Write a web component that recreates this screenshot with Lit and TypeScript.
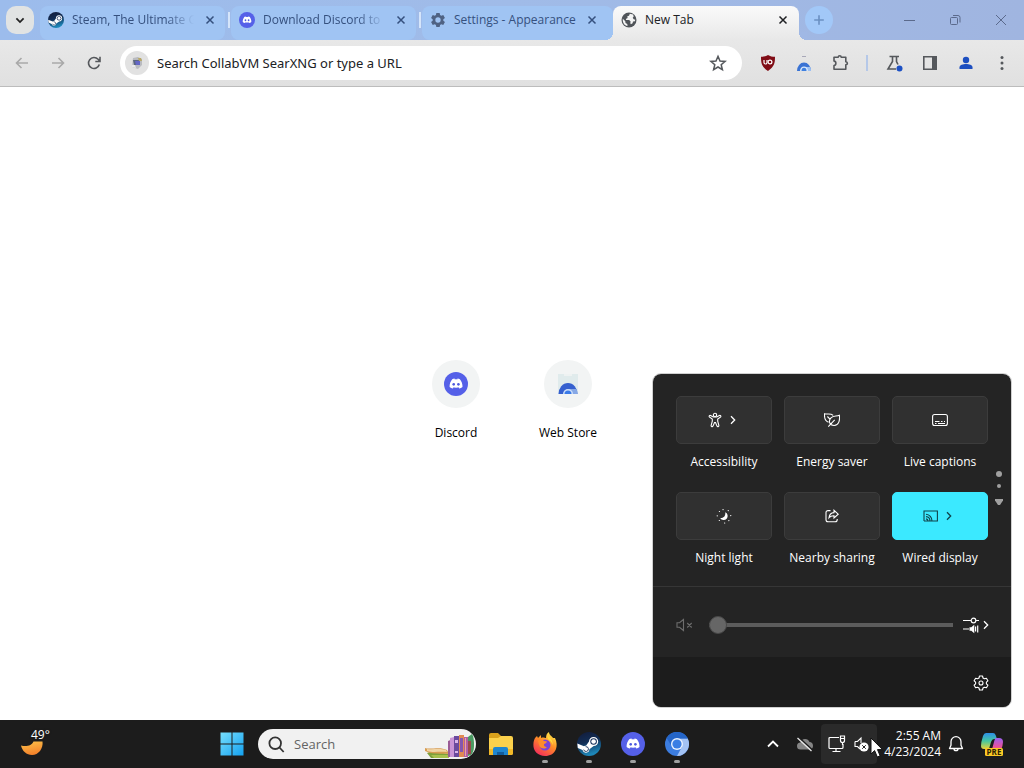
import { LitElement, html, css, svg, nothing } from "lit";
import { customElement } from "lit/decorators.js";
import { classMap } from "lit/directives/class-map.js";

const chevronRight = svg`<path d="M6 4.200 9.700 8 6 11.800" fill="none" stroke="currentColor" stroke-width="1.300"/>`;

const discordFace = svg`<path fill="#fff" d="M8.200 7.300C9 6.900 9.700 6.700 10.500 6.600l.4.800c.8-.1 1.500-.1 2.300 0l.4-.8c.8.1 1.500.3 2.300.7 1.700 2.200 2.800 4.800 2.600 7.800-1 .8-2 1.300-3.200 1.500l-.8-1.200c.4-.1.700-.3 1-.5-2.100 1-4.800 1-6.900 0 .3.200.6.400 1 .5l-.8 1.200c-1.200-.2-2.200-.7-3.200-1.500-.2-3 .9-5.600 2.600-7.800z"/><ellipse cx="9.700" cy="12.300" rx="1.300" ry="1.400" fill="#4e5ade"/><ellipse cx="14.400" cy="12.300" rx="1.300" ry="1.400" fill="#4e5ade"/>`;

const discordLogo = (size: number) => html`<svg width=${size} height=${size} viewBox="0 0 24 24" aria-hidden="true"><circle cx="12" cy="12" r="12" fill="#5560e8"/>${discordFace}</svg>`;

const steamLogo = (size: number) => html`<svg width=${size} height=${size} viewBox="0 0 24 24" aria-hidden="true">
  <defs><linearGradient id="st" x1="0" y1="0" x2="0.300" y2="1"><stop offset="0" stop-color="#121a38"/><stop offset=".5" stop-color="#122e55"/><stop offset="1" stop-color="#1d86b8"/></linearGradient></defs>
  <circle cx="12" cy="12" r="12" fill="url(#st)"/>
  <path d="M0.300 11.500 7 14.300c.7-.4 1.300-.5 2-.5l3-4.300a4.600 4.600 0 1 1 4.700 4.600l-4.300 3.100a3.500 3.500 0 0 1-6.900.8L.8 15.900z" fill="#fff"/>
  <circle cx="16.600" cy="9.500" r="3.300" fill="#16305a"/><circle cx="16.600" cy="9.500" r="2.300" fill="#fff"/>
  <path d="M6.700 17.600a2.400 2.400 0 1 0 1.900-2.900" fill="none" stroke="#16305a" stroke-width=".9"/>
</svg>`;

const gear = html`<svg width="16" height="16" viewBox="0 0 24 24" aria-hidden="true"><path fill="#4f6283" fill-rule="evenodd" d="M9.500 1.500h5l.6 3.100 1.800 1 3-1 2.500 4.300-2.400 2.100v2l2.400 2.100-2.500 4.300-3-1-1.800 1-.6 3.100h-5l-.6-3.100-1.800-1-3 1-2.500-4.300L4 13v-2L1.600 8.900l2.500-4.300 3 1 1.800-1zM12 8a4 4 0 1 0 0 8 4 4 0 0 0 0-8z"/></svg>`;

const globe = html`<svg width="16" height="16" viewBox="0 0 16 16" aria-hidden="true"><circle cx="8" cy="8" r="7.500" fill="#505459"/><path fill="#f4f4f4" d="M8.800 1.800 8 3.700l-1.700.6.300 1.600-1.800 1 .4 1.200h3l1.500 1.700-.5 1.300.7 1.200 1.700-1 .4-1.700 1.900-.4.400-1.400-1.600-.5-1-1.500 1-1.300-.6-1.900zM1.800 6.700l2.500 2.600.2 1.700 1.800.9.200 2.200C3.600 13.500 1.400 10.900 1.800 6.700z"/></svg>`;

const tabs = [
  { title: "Steam, The Ultimate G", icon: steamLogo(16), active: false, fade: true },
  { title: "Download Discord to", icon: discordLogo(16), active: false, fade: true },
  { title: "Settings - Appearance", icon: gear, active: false, fade: false },
  { title: "New Tab", icon: globe, active: true, fade: false },
];

const stroke = (body: unknown, size = 20, width = "1.6") =>
  html`<svg class="line" width=${size} height=${size} viewBox="0 0 20 20" stroke-width=${width} aria-hidden="true">${body}</svg>`;

const webStore = (size: number) => html`<svg width=${size} height=${size} viewBox="0 0 24 24" aria-hidden="true">
  <path d="M2 2h20v20H2z" fill="#e0ebec"/><path d="M8 2h8v2H8z" fill="#eef2f2"/>
  <path d="M2.500 22a9.500 11 0 0 1 19 0z" fill="#3560cf"/><path d="M13 17h7.500a10 10 0 0 1 1 5h-6z" fill="#86a8e6"/>
  <path d="M7 22a5 5 0 0 1 10 0z" fill="#cfe0fa"/><path d="M8.500 22a3.500 3.500 0 0 1 7 0z" fill="#3b7be8"/></svg>`;

const tiles = [
  {
    label: "Accessibility", more: true, on: false,
    icon: svg`<circle cx="8" cy="3" r="1.700"/><path d="M2.300 4.900c-.6-.9.400-1.800 1.300-1.400L6.300 5h3.400l2.700-1.500c.9-.4 1.900.5 1.300 1.400L10.700 7v2.200l1.200 4.400c.1 1-1.400 1.500-1.900.5L8.500 10.500h-1L6 14.100c-.5 1-2 .5-1.900-.5l1.200-4.400V7z"/>`,
  },
  {
    label: "Energy saver", more: false, on: false,
    icon: svg`<path d="M4.500 10.300C1.300 9 .2 5.500.6 1.700c2.900.8 5.900-.7 8.600 1.600M15.400 3.200c.6 5.500-.7 10.200-5.200 10.300-5 .1-6-5-3.200-7.700C9.400 3.500 12.300 4.500 15.400 3.200zM4.300 14.700l6.400-6.800M3.400 4.500l2.500 2.600"/>`,
  },
  {
    label: "Live captions", more: false, on: false,
    icon: svg`<rect x=".6" y="2.500" width="14.800" height="11" rx="2"/><path d="M3 9.500h4.500M9 9.500h1.500M12 9.500h1M3 11.500h1.500M6 11.500h7" stroke-width="1"/>`,
  },
  {
    label: "Night light", more: false, on: false,
    icon: svg`<path fill="currentColor" stroke="none" d="M9.200 4.300a4 4 0 1 1-5 5.700c3 .7 5.800-2 5-5.700z"/><path stroke-linecap="round" d="M3.400 3.500h.1M7 1.600h.1M12.200 2.600h.1M14.700 7.600h.1M12.800 12.600h.1M8.600 15h.1M3.300 12.500h.1M1.200 7.800h.1" stroke-width="1.200"/>`,
  },
  {
    label: "Nearby sharing", more: false, on: false,
    icon: svg`<path d="M6.500 2.600H4A2 2 0 0 0 2 4.600v7.200a2 2 0 0 0 2 2h7.200a2 2 0 0 0 2-2V11M5 9.700c.4-3.300 2.300-5 5-5.100V2.300l4.200 3.900L10 10V7.700C7.800 7.600 6.300 8.200 5 9.700z"/>`,
  },
  {
    label: "Wired display", more: true, on: true,
    icon: svg`<path d="M1 13V3h13.400v10H10M3 6.300A6.600 6.600 0 0 1 9 13M3 8.600A4.400 4.400 0 0 1 7 13M3 10.900A2.200 2.200 0 0 1 5 13M1 13h9"/>`,
  },
];

@customElement("browser-window")
class BrowserWindow extends LitElement {
  static styles = css`
    :host { display: flex; flex-direction: column; min-height: 0; background: #fff; font-family: "Open Sans", "Noto Sans", sans-serif; color: #202124; }
    * { box-sizing: border-box; }
    button { border: 0; padding: 0; margin: 0; background: none; font: inherit; color: inherit; display: grid; place-items: center; }
    svg { display: block; flex: none; }
    .line { fill: none; stroke: currentColor; }
    .strip { display: flex; height: 40px; padding: 6px 0 0 6px; background: linear-gradient(90deg, #9cbcec, #a0bbe8 50%, #a0b5e0); }
    .pick { width: 28px; height: 28px; border-radius: 10px; background: #e1e3e3; margin-right: 6px; color: #222; }
    .tabs { display: flex; flex: 0 1 765px; min-width: 0; }
    .tab { flex: 1 1 0; min-width: 0; display: flex; align-items: center; height: 34px; padding: 0 7px 6px 8px; border-radius: 8px; background: #a0c4f3; color: #35507e; position: relative; margin-right: 6px; font-size: 12px; line-height: 16px; }
    .tab:not(.active):not(.last)::after { content: ""; position: absolute; right: -5px; top: 6px; width: 2px; height: 16px; background: #d5e5fa; }
    .title { flex: 1; min-width: 0; overflow: hidden; white-space: nowrap; margin: 0 4px 0 8px; }
    .tab.fade .title { mask-image: linear-gradient(90deg, #000 calc(100% - 32px), transparent calc(100% - 4px)); }
    .tab.last { flex-basis: 6px; margin-right: 0; padding-right: 13px; }
    .tab.active { color: #202124; background: linear-gradient(#fafafa, #e8e8e8); border-radius: 8px 8px 0 0; padding-right: 8px; }
    .tab.active::before, .tab.active::after { content: ""; position: absolute; bottom: 0; width: 8px; height: 8px; }
    .tab.active::before { left: -8px; background: radial-gradient(circle at 0 0, #a0c4f3 8px, #e8e8e8 8px); }
    .tab.active::after { right: -8px; background: radial-gradient(circle at 100% 0, #a0b8e5 8px, #e8e8e8 8px); }
    .close { width: 16px; height: 16px; }
    .plus { width: 28px; height: 28px; border-radius: 14px; background: #a2c8f8; color: #6b90c2; }
    .win { display: flex; margin: -6px 0 0 auto; color: #5b6a8c; }
    .win button { width: 46px; height: 40px; }
    .bar { display: flex; align-items: center; height: 47px; padding: 0 4px; background: linear-gradient(#e8e8e8, #e0e0e0); border-bottom: 1px solid #bcbcbc; color: #55585c; }
    .bar > button { width: 36px; height: 34px; }
    .bar > .off { color: #a9a9a9; }
    .omni { flex: 1; min-width: 0; display: flex; align-items: center; height: 34px; margin: 0 8px; padding: 0 14px 0 5px; border-radius: 17px; background: #fff; }
    .engine { width: 24px; height: 24px; border-radius: 12px; background: #e2e2e2; display: grid; place-items: center; margin-right: 8px; }
    .omni input { flex: 1; min-width: 0; border: 0; outline: 0; padding: 0; background: none; font-family: "Noto Sans", sans-serif; font-size: 13px; line-height: 20px; }
    .omni input::placeholder { color: #202124; opacity: 1; }
    .sep { width: 18px; height: 16px; display: grid; place-items: center; }
    .sep::before { content: ""; width: 2px; height: 16px; background: #b5c8e8; }
    .page { flex: 1; min-height: 0; display: flex; justify-content: center; align-items: flex-start; padding-top: 268px; }
    .short { width: 112px; display: flex; flex-direction: column; align-items: center; text-decoration: none; color: #000; font-size: 12px; line-height: 16px; padding-top: 5px; }
    .disc { width: 48px; height: 48px; border-radius: 24px; background: #f2f4f4; display: grid; place-items: center; margin-bottom: 17px; }
  `;

  render() {
    const cross = svg`<path d="M4.500 4.500l7 7M11.500 4.500l-7 7" stroke="currentColor" stroke-width="1.500" fill="none"/>`;
    return html`
      <div class="strip">
        <button class="pick" aria-label="Search tabs">${stroke(svg`<path d="M5.500 8 10 12.500 14.500 8"/>`, 16, "2.2")}</button>
        <div class="tabs" role="tablist">
          ${tabs.map((t, i) => html`
            <div class=${classMap({ tab: true, active: t.active, fade: t.fade, last: i === 2 })} role="tab" aria-selected=${t.active}>
              ${t.icon}<span class="title">${t.title}</span>
              <button class="close" aria-label="Close tab"><svg width="16" height="16" viewBox="0 0 16 16">${cross}</svg></button>
            </div>`)}
        </div>
        <button class="plus" aria-label="New tab">${stroke(svg`<path d="M10 4v12M4 10h12"/>`, 16, "2")}</button>
        <div class="win">
          <button aria-label="Minimize">${stroke(svg`<path d="M5 10.500h11"/>`, 20, "1")}</button>
          <button aria-label="Restore">${stroke(svg`<rect x="5.500" y="7.500" width="7" height="7" rx="1"/><path d="M8 5.500h5a2 2 0 0 1 2 2v5"/>`, 20, "1")}</button>
          <button aria-label="Close">${stroke(svg`<path d="M5 5l10 10M15 5 5 15"/>`, 20, "1")}</button>
        </div>
      </div>
      <div class="bar">
        <button class="off" aria-label="Back">${stroke(svg`<path d="M16 10H4.500M9.500 5 4.500 10l5 5"/>`)}</button>
        <button class="off" aria-label="Forward">${stroke(svg`<path d="M4 10h11.500M10.500 5l5 5-5 5"/>`)}</button>
        <button aria-label="Reload">${stroke(svg`<path d="M15.300 11.500a5.500 5.500 0 1 1-1.200-5.200l1.700 1.900M16 3.800v4.700h-4.700"/>`, 20, "1.6")}</button>
        <div class="omni">
          <span class="engine"><svg width="14" height="14" viewBox="0 0 14 14"><path fill="#b9bbc0" d="M3 2 8 1l4 2v6l-4 4-6-2z"/><path fill="#5b6780" d="M3 4h6v5H4z"/><path fill="#6467c5" d="M5 5h5v4H6z"/><path fill="#b9a866" d="M8 2h3l1 3H9z"/><path fill="#e9eaec" d="M2 9h3l1 3-4-1z"/></svg></span>
          <input type="text" aria-label="Address and search bar" placeholder="Search CollabVM SearXNG or type a URL">
          <button aria-label="Bookmark this tab">${stroke(svg`<path d="m10 3.300 2 4.700 5.100.4-3.900 3.300 1.200 5-4.400-2.700-4.400 2.700 1.200-5L2.900 8.400 8 8z"/>`, 20, "1.5")}</button>
        </div>
        <button aria-label="uBlock Origin"><svg width="16" height="16" viewBox="0 0 16 16"><path fill="#800d16" d="M8 0c2 1.300 4.500 1.800 7 1.800 0 6.200-.5 9.700-7 14.200C1.500 11.500 1 8 1 1.800 3.500 1.800 6 1.300 8 0z"/><path d="M4 5v2.500a1.500 1.500 0 0 0 3 0V5" stroke="#fff" stroke-width="1.200" fill="none"/><circle cx="10" cy="7" r="1.900" stroke="#fff" stroke-width="1.200" fill="none"/></svg></button>
        <button aria-label="Chromium Web Store"><svg width="16" height="16" viewBox="0 0 16 16"><path d="M6 1.500h4" stroke="#a8a8b8"/><path fill="#3a73d4" d="M1 16a7 8.500 0 0 1 14 0z"/><path fill="#9fc2f2" d="M9 12h5.200a7 7 0 0 1 .8 4h-4z"/><path fill="#dceafb" d="M4 16a4 4.600 0 0 1 8 0z"/><path fill="#3f80df" d="M5.500 16a2.500 3.200 0 0 1 5 0z"/></svg></button>
        <button aria-label="Extensions">${stroke(svg`<path stroke-linejoin="round" d="M4 4.300h4.200c.1-2.100 2.900-2.100 3 0h4.600v4.400c2.100.1 2.100 2.900 0 3v4.600H4v-3.800c2.500-.1 2.500-4.300 0-4.400z"/>`, 20, "1.6")}</button>
        <span class="sep"></span>
        <button aria-label="Experiments"><svg width="20" height="20" viewBox="0 0 20 20"><path d="M5.500 3.500H15M8.500 3.500v5L4 16h8M12.500 3.500v5l1.500 3" fill="none" stroke="currentColor" stroke-width="1.600"/><circle cx="15.500" cy="15.500" r="3" fill="#1c50c4"/></svg></button>
        <button aria-label="Side panel"><svg width="20" height="20" viewBox="0 0 20 20"><path d="M3.800 3.800h12.400v12.400H3.800z" fill="none" stroke="currentColor" stroke-width="1.600"/><path d="M12 3h5v14h-5z" fill="currentColor"/></svg></button>
        <button aria-label="Profile"><svg width="20" height="20" viewBox="0 0 20 20" fill="#1d4fc0"><circle cx="10" cy="7" r="3.200"/><path d="M3.500 16v-1.700c0-2 3.500-3.200 6.500-3.200s6.500 1.200 6.500 3.200V16z"/></svg></button>
        <button aria-label="Menu"><svg width="20" height="20" viewBox="0 0 20 20" fill="currentColor"><circle cx="10" cy="4.500" r="1.500"/><circle cx="10" cy="10" r="1.500"/><circle cx="10" cy="15.500" r="1.500"/></svg></button>
      </div>
      <div class="page">
        <a class="short" href="#discord"><span class="disc">${discordLogo(24)}</span>Discord</a>
        <a class="short" href="#store"><span class="disc">${webStore(24)}</span>Web Store</a>
      </div>`;
  }
}

@customElement("quick-settings")
class QuickSettings extends LitElement {
  static styles = css`
    :host { display: block; width: 358px; border-radius: 8px; overflow: hidden; background: #242424; color: #fff; font-family: "Open Sans", "Noto Sans", sans-serif; outline: 1px solid #8a8a8a66; }
    * { box-sizing: border-box; }
    svg { display: block; flex: none; }
    .line { fill: none; stroke: currentColor; }
    .grid { position: relative; display: grid; grid-template-columns: repeat(3, 1fr); column-gap: 12px; row-gap: 12px; padding: 22px 23px 10px; border-bottom: 1px solid #363636; }
    .cell { display: flex; flex-direction: column; align-items: stretch; text-align: center; font-size: 12px; line-height: 36px; white-space: nowrap; }
    .tile { height: 48px; border: 1px solid #3c3c3c; border-radius: 5px; background: #303030; color: #fff; padding: 0; display: flex; align-items: center; justify-content: center; gap: 2px; }
    .tile.on { background: #3be9ff; border-color: #3be9ff; color: #10424a; }
    .pager { position: absolute; right: 7px; top: 96px; }
    .sound { display: flex; align-items: center; height: 70px; padding: 5px 19px 0 23px; }
    .sound button, .foot button { border: 0; padding: 0; background: none; color: #fff; display: flex; align-items: center; }
    .sound .mute { color: #6d6d6d; margin-right: 16px; }
    .vol { appearance: none; flex: 1; min-width: 0; height: 20px; margin: 0 9px 0 0; background: linear-gradient(#5c5c5c, #5c5c5c) center / 100% 4px no-repeat; border-radius: 2px; }
    .vol::-webkit-slider-thumb { appearance: none; width: 18px; height: 18px; border-radius: 9px; background: #666; border: 1px solid #484848; }
    .foot { display: flex; justify-content: flex-end; align-items: center; height: 50px; padding: 2px 22px 0; background: #1c1c1c; }
  `;

  render() {
    return html`
      <div class="grid">
        ${tiles.map((t, i) => html`
          <div class="cell">
            <button class=${classMap({ tile: true, on: t.on })} aria-labelledby="tile-${i}">
              <svg class="line" width="16" height="16" viewBox="0 0 16 16" stroke-width="1.1">${t.icon}</svg>
              ${t.more ? html`<svg width="16" height="16" viewBox="0 0 16 16">${chevronRight}</svg>` : nothing}
            </button>
            <span id="tile-${i}">${t.label}</span>
          </div>`)}
        <svg class="pager" width="10" height="38" viewBox="0 0 10 38" fill="#a0a0a0"><circle cx="5" cy="4" r="3"/><circle cx="5" cy="16" r="2"/><path d="M1 29h8v1.500L6 35H4L1 30.500z"/></svg>
      </div>
      <div class="sound">
        <button class="mute" aria-label="Unmute">
          <svg class="line" width="17" height="16" viewBox="0 0 17 16" stroke-width="1.1"><path d="M1 5.700h2.500L7.500 2.500v11L3.500 10.300H1zM11.200 6l4.500 4.500M15.700 6l-4.500 4.500"/></svg>
        </button>
        <input class="vol" type="range" min="0" max="100" value="0" aria-label="Volume">
        <button aria-label="Sound output">
          <svg width="18" height="18" viewBox="0 0 18 18" fill="none" stroke="#fff" stroke-width="1.200"><path d="M1 4.500h8M14 4.500h3"/><circle cx="11.500" cy="4.500" r="2.300"/><path d="M1 13h6"/><path fill="#fff" stroke="none" d="M7.500 11.300h1.800l3-2.500v8.400l-3-2.500H7.500z"/><path d="M13.600 10.500v5M15.700 9.500v7"/></svg>
          <svg width="12" height="16" viewBox="2 0 12 16">${chevronRight}</svg>
        </button>
      </div>
      <div class="foot">
        <button aria-label="All settings">
          <svg class="line" width="16" height="16" viewBox="0 0 16 16" stroke-width="1.1" stroke-linejoin="round"><path d="M6.500 1h3l.5 2 1.400.8 2-.6 1.500 2.600L13.400 7.200v1.600l1.500 1.400-1.500 2.600-2-.6-1.400.8-.5 2h-3l-.5-2-1.400-.8-2 .6L1.100 10.200 2.600 8.800V7.200L1.100 5.800l1.500-2.600 2 .6L6 3z"/><circle cx="8" cy="8" r="2"/></svg>
        </button>
      </div>`;
  }
}

@customElement("task-bar")
class TaskBar extends LitElement {
  static styles = css`
    :host { display: flex; justify-content: space-between; height: 48px; background: #1c1c1c; color: #fff; font-family: "Open Sans", "Noto Sans", sans-serif; position: relative; font-size: 12px; line-height: 16px; }
    * { box-sizing: border-box; }
    svg { display: block; flex: none; }
    button { border: 0; padding: 0; margin: 0; background: none; font: inherit; color: inherit; display: grid; place-items: center; }
    .line { fill: none; stroke: currentColor; }
    .weather { width: 152px; display: flex; align-items: flex-start; justify-content: flex-start; padding: 7px 0 0 20px; }
    .weather svg { margin-top: 7px; }
    .temp { margin-left: -13px; text-shadow: 0 0 2px #1c1c1c; }
    .mid { display: flex; align-items: center; }
    .app { width: 44px; height: 48px; position: relative; }
    .app.run::after { content: ""; position: absolute; left: 19px; bottom: 5px; width: 6px; height: 3px; border-radius: 2px; background: #a0a0a0; }
    .find { display: flex; align-items: center; width: 218px; height: 30px; border-radius: 15px; background: #f1f1f1; margin: 0 3px 0 4px; padding-left: 10px; overflow: hidden; color: #333; }
    .find input { flex: 1; min-width: 0; border: 0; outline: 0; padding: 0; margin-left: 9px; background: none; font: inherit; font-size: 13px; line-height: 20px; }
    .find input::placeholder { color: #646464; opacity: 1; }
    .tray { display: flex; align-items: center; padding-right: 18px; }
    .tray > button { width: 32px; height: 40px; }
    .tray > .net { width: 56px; display: flex; align-items: center; justify-content: center; gap: 8px; background: #2a2a2a; border-radius: 4px; }
    .tray > .clock { width: 64px; display: block; text-align: right; white-space: nowrap; }
    .tray > .bell { width: 30px; }
    .tray > .pilot { width: 28px; margin-left: 7px; }
    .pointer { position: absolute; left: 870px; top: 17px; }
  `;

  render() {
    return html`
      <button class="weather" aria-label="Weather">
        <svg width="24" height="22" viewBox="0 0 24 22"><defs><linearGradient id="m" x1="0" y1="0" x2=".3" y2="1"><stop offset="0" stop-color="#fbc34b"/><stop offset="1" stop-color="#f4832b"/></linearGradient></defs><path fill="url(#m)" d="M1 11.500c5 1.500 11 .2 12.500-4h9c1 7-4 13.500-10.500 13.500-5.500 0-9.800-4-11-9.500z"/></svg>
        <span class="temp">49°</span>
      </button>
      <div class="mid">
        <button class="app" aria-label="Start"><svg width="24" height="24" viewBox="0 0 24 24"><defs><linearGradient id="w" x1="0" y1="0" x2="24" y2="24" gradientUnits="userSpaceOnUse"><stop offset="0" stop-color="#79e0fd"/><stop offset="1" stop-color="#12a0f0"/></linearGradient></defs><path fill="url(#w)" d="M.5.500h11v11H.5zM12.500.5h11v11h-11zM.5 12.500h11v11H.5zM12.500 12.500h11v11h-11z"/></svg></button>
        <div class="find">
          <svg class="line" width="17" height="17" viewBox="0 0 17 17" stroke-width="1.8"><circle cx="7.200" cy="7.200" r="5.800"/><path d="m11.500 11.500 4.200 4.500"/></svg>
          <input type="search" aria-label="Search" placeholder="Search">
          <svg width="51" height="30" viewBox="0 0 51 30">
            <path fill="#7fa03a" d="M2 24c6-3 16 0 22 1v4H6z"/><path fill="#d79c52" d="M0 19c5 2 15-2 22 2l2 4c-9-1-17 1-24-3z"/><path fill="#f0d3a4" d="M2 20c6 1 12-1 19 1l1 2c-8-1-13 1-20-1z"/><path fill="#a8c04e" d="M6 26h18v3H9z"/>
            <path fill="#9a5b96" d="M23 12l5-2v18h-5z"/><path fill="#c994d6" d="M25 9l4-1v20h-4z"/><path fill="#6b4a9e" d="M29 7h5v21h-5z"/><path fill="#d8b4e8" d="M30 11h3v3h-3zM30 22h3v2h-3z"/><path fill="#e08a54" d="M34 6h5v22h-5z"/><path fill="#8557b0" d="M35 9h3v14h-3z"/><path fill="#b060a6" d="M39 8h4v20h-4z"/><path fill="#efa3a0" d="M40 9h1v18h-1z"/><path fill="#4a9a62" d="M43 8l4-3c2 3 2 8 2 12s-1 7-3 9l-3 1z"/><path fill="#9a4a4c" d="M43 12h3v13h-3z"/>
          </svg>
        </div>
        <button class="app" aria-label="File Explorer"><svg width="26" height="24" viewBox="0 0 26 24"><path fill="#d9a11c" d="M1 3q0-2 2-2h7l3 3v6H1z"/><path fill="#fbd14c" d="M1 6h9l3-2h10q2 0 2 2v15q0 2-2 2H1z"/><path fill="#f2b927" d="M1 17h24v4q0 2-2 2H1z"/><path fill="#1f86cf" d="M5 23v-6q0-2 2-2h11q2 0 2 2v6z"/><path fill="#125c9c" d="M9 20h7v3H9z"/></svg></button>
        <button class="app run" aria-label="Firefox"><svg width="24" height="24" viewBox="0 0 24 24"><defs><linearGradient id="fx" x1=".8" y1="0" x2=".2" y2="1"><stop offset="0" stop-color="#fff04a"/><stop offset=".45" stop-color="#ff8b27"/><stop offset="1" stop-color="#f3265e"/></linearGradient></defs><path fill="url(#fx)" d="M2 6l2-2 1 2 3-3v3c2-1 4 0 5 0 0-3 1-5 3-6 0 3 3 4 4 6l2 0c2 4 2 8 1 11-2 5-6 7-11 7C5 24 0 19 .4 12.500.5 9.500 1 8 2 6z"/><circle cx="12" cy="13" r="5.500" fill="#7a42d8"/><path fill="#ff8b2c" d="M5 9c3-2 5-1 6 0l3 .6c-.4 1.700-2 2.200-3 2.400-.5 2 1 3 2.800 3-1.300 2.300-5.500 2-7.300-.4z"/><path fill="#ffd93d" d="M14 3c3 2 6 6 6 10-1-3-4-5-5-6z"/></svg></button>
        <button class="app run" aria-label="Steam">${steamLogo(24)}</button>
        <button class="app run" aria-label="Discord">${discordLogo(24)}</button>
        <button class="app run" aria-label="Chromium"><svg width="24" height="24" viewBox="0 0 24 24"><circle cx="12" cy="12" r="12" fill="#3c7de0"/><path fill="#a3c3f5" d="M12 6.500h10.700A12 12 0 0 1 12 24l5-9.200z"/><path fill="#2465c8" d="M1.600 6A12 12 0 0 1 22.700 6.500H12A5.500 5.500 0 0 0 7 14.800z"/><circle cx="12" cy="12" r="6" fill="#e9f2ff"/><circle cx="12" cy="12" r="4.600" fill="#3a7ee4"/></svg></button>
      </div>
      <div class="tray">
        <button aria-label="Show hidden icons">${stroke(svg`<path d="M5 12.500 10 7.500l5 5"/>`, 20, "1.8")}</button>
        <button aria-label="OneDrive"><svg width="18" height="16" viewBox="0 0 18 16"><path fill="#858585" d="M4.500 13.500a3.500 3.500 0 0 1 0-7A4.800 4.800 0 0 1 13.500 6a3.800 3.800 0 0 1 .5 7.500z"/><path d="M2.500 1l14 13" stroke="#1c1c1c" stroke-width="1.500"/><path d="M1.500 2l14 13" stroke="#e8e8e8" stroke-width="1.300"/></svg></button>
        <button class="net" aria-label="Network and volume">
          <svg class="line" width="18" height="18" viewBox="0 0 18 18" stroke-width="1.2"><path d="M11 2.500H2q-1 0-1 1v9q0 1 1 1h12q1 0 1-1V9M4.500 16.500h8M8 13.500v3M12.500 1h4v4.500a2 2 0 0 1-4 0zM12.500 3.500h4M14.500 7.500V10"/></svg>
          <svg width="17" height="18" viewBox="0 0 17 18"><path d="M1 6.500h2.500L7 3v5M1 6.500v5h2.500L6 14" fill="none" stroke="#fff" stroke-width="1.100"/><circle cx="10" cy="12" r="4.600" fill="#fff"/><path d="M8.200 10.200l3.600 3.600M11.800 10.200l-3.600 3.600" stroke="#222"/></svg>
        </button>
        <button class="clock">2:55 AM<br>4/23/2024</button>
        <button class="bell" aria-label="Notifications"><svg class="line" width="16" height="18" viewBox="0 0 16 18" stroke-width="1.3" stroke-linejoin="round"><path d="M8 1.700a5 5 0 0 0-5 5v3.500L1.500 13.500h13L13 10.200V6.700a5 5 0 0 0-5-5zM6 13.700a2 2 0 0 0 4 0"/></svg></button>
        <button class="pilot" aria-label="Copilot preview"><svg width="24" height="24" viewBox="0 0 24 24"><defs><linearGradient id="ca" x1="0" y1="0" x2="0" y2="1"><stop offset="0" stop-color="#2d8fe8"/><stop offset=".5" stop-color="#45c8a0"/><stop offset="1" stop-color="#e9d338"/></linearGradient><linearGradient id="cb" x1="0" y1="0" x2="0" y2="1"><stop offset="0" stop-color="#9a60f0"/><stop offset=".6" stop-color="#e8529a"/><stop offset="1" stop-color="#f59058"/></linearGradient></defs><path fill="url(#ca)" d="M6 1h7q2 0 2.600 2L17 7h-3q-2 0-3 3l-2 7H4q-3 0-3-3 0-4 2-10 1-3 3-3z"/><path fill="url(#cb)" d="M16 6h3q4 0 4 4 0 3-2 8-1 3-4 3h-6l3-11q1-4 2-4z"/><rect x="5" y="16" width="18" height="8" rx="1.500" fill="#fbc926"/><text x="14" y="23" font-size="8" font-weight="700" text-anchor="middle" fill="#2a2104">PRE</text></svg></button>
      </div>
      <svg class="pointer" width="14" height="22" viewBox="0 0 14 22" aria-hidden="true"><path d="M1 1v16l3.600-3.400L7.300 20l2.800-1.200L7.500 12.600H12.500z" fill="#fff" stroke="#111" stroke-width="1"/></svg>`;
  }
}

@customElement("app-root")
class AppRoot extends LitElement {
  static styles = css`
    :host { display: flex; flex-direction: column; height: 100vh; overflow: hidden; }
    .desk { flex: 1; min-height: 0; display: flex; flex-direction: column; position: relative; }
    .browser { flex: 1; }
    .flyout { position: absolute; right: 13px; bottom: 13px; }
  `;

  render() {
    return html`
      <div class="desk">
        <browser-window class="browser"></browser-window>
        <quick-settings class="flyout"></quick-settings>
      </div>
      <task-bar></task-bar>`;
  }
}
